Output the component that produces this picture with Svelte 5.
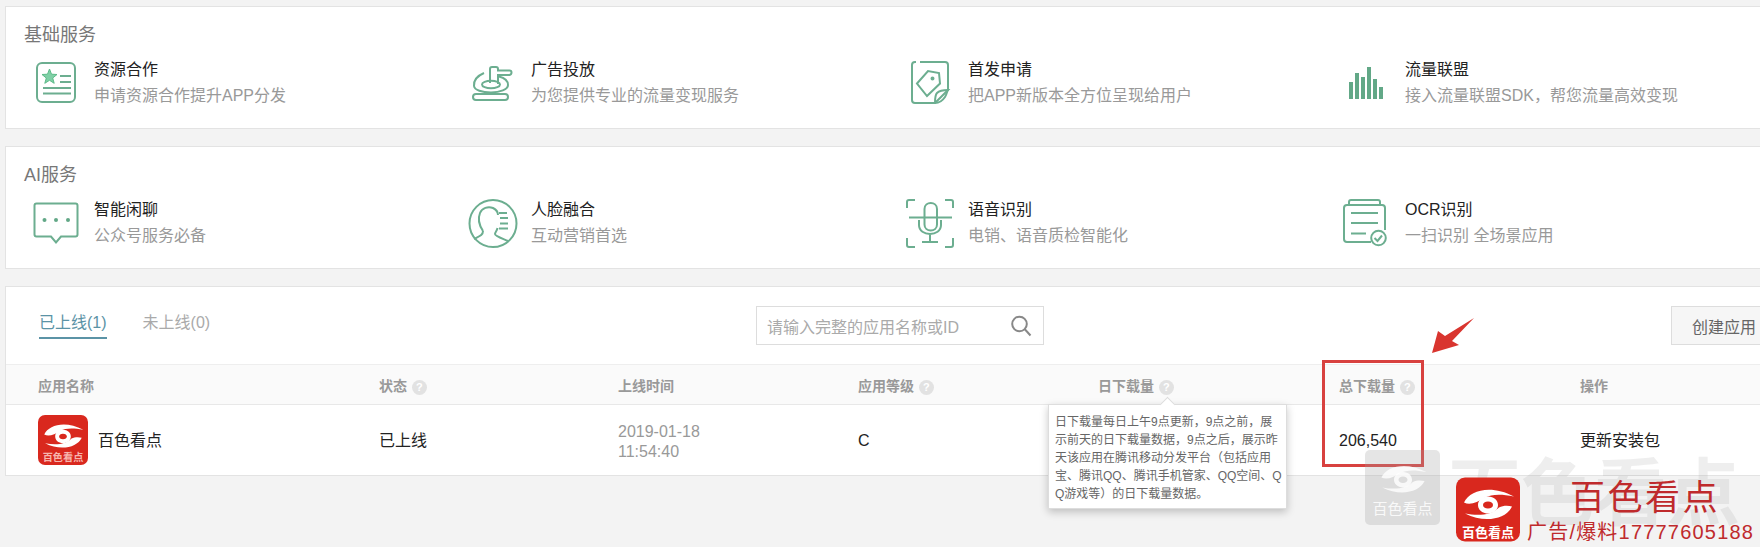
<script>
  const basic = [
    { icon: 'star', name: '资源合作', desc: '申请资源合作提升APP分发' },
    { icon: 'stamp', name: '广告投放', desc: '为您提供专业的流量变现服务' },
    { icon: 'tag', name: '首发申请', desc: '把APP新版本全方位呈现给用户' },
    { icon: 'bars', name: '流量联盟', desc: '接入流量联盟SDK，帮您流量高效变现' }
  ];
  const ai = [
    { icon: 'chat', name: '智能闲聊', desc: '公众号服务必备' },
    { icon: 'face', name: '人脸融合', desc: '互动营销首选' },
    { icon: 'mic', name: '语音识别', desc: '电销、语音质检智能化' },
    { icon: 'ocr', name: 'OCR识别', desc: '一扫识别 全场景应用' }
  ];
  const sections = [
    { title: '基础服务', items: basic },
    { title: 'AI服务', items: ai }
  ];
  const bars = [
    [14, 24], [20, 15], [26, 19], [32, 9], [38, 21], [44, 29]
  ];
</script>

{#snippet icon(name)}
  <svg class="icon" viewBox="0 0 64 50" width="64" height="50" aria-hidden="true">
    {#if name === 'star'}
      <rect x="13" y="5" width="38" height="39" rx="5" />
      <path class="star" d="M25.5 11l2 5.2 5.5.3-4.300 3.500 1.500 5.300-4.700-3-4.700 3 1.500-5.300-4.300-3.500 5.500-.3z" />
      <path d="M36 18h11M36 24h11M19 30h28M19 35.500h28" />
    {:else if name === 'stamp'}
      <rect x="12" y="36" width="35" height="6" rx="3" />
      <path d="M23 15C16 18 12.500 23 13 28c.5 4 8 6.500 17 6.500s17-3 17-7.500c0-4-3-7-9-8.500" />
      <ellipse cx="30" cy="26.500" rx="9" ry="3.800" />
      <path d="M29 25V11q0-2 2-2h4q2 0 2 2v1.500h11.500q2 0 2 2T48.500 17H37v9" />
    {:else if name === 'tag'}
      <path d="M18 4h-1a3 3 0 0 0-3 3v35a3 3 0 0 0 3 3h20l13-13V7a3 3 0 0 0-3-3H22" />
      <path d="M37 45c0-5 0-8 2-10 2-2 6-3 11-3-1 1-1 4-3 7s-6 6-10 6z" />
      <path d="M19 25.500l11-12.500 11 2 1 10.500-13 12.500z" />
      <circle cx="34.500" cy="20.500" r="1" />
    {:else if name === 'bars'}
      {#each bars as [x, y]}
        <rect class="solid" x={x} y={y} width="4" height={41 - y} />
      {/each}
    {:else if name === 'chat'}
      <path d="M12.500 5.500h39a2 2 0 0 1 2 2v29a2 2 0 0 1-2 2H37l-5 6-5-6H12.500a2 2 0 0 1-2-2v-29a2 2 0 0 1 2-2z" />
      <circle class="solid" cx="20.500" cy="22" r="2" />
      <circle class="solid" cx="32" cy="22" r="2" />
      <circle class="solid" cx="44" cy="22" r="2" />
    {:else if name === 'face'}
      <circle cx="32" cy="25.500" r="23.500" />
      <path d="M22 33c-4-6-5-13-3-18 2-5 8-7 13-5 3 1.500 5 4 5 7" />
      <path d="M36.500 30c-.5 3-2.500 4-2.500 6 0 2 6 4 13 7M22 33c0 4-3 5-9 8" />
      <path d="M38 15h8M39 20h8M39 25.500h8M38 30.500h9" />
    {:else if name === 'mic'}
      <path d="M9 10V4a2 2 0 0 1 2-2h6M47 2h6a2 2 0 0 1 2 2v6M9 40v7a2 2 0 0 0 2 2h6M47 49h6a2 2 0 0 0 2-2v-7" />
      <path d="M11 19.500h43" />
      <path d="M26.500 19.500V11c0-8 12.500-8 12.500 0v8.500M26.500 19.500v7c0 8 12.500 8 12.500 0v-7" />
      <path d="M21 22v5c0 12 22 12 22 0v-5M32 36v8M24 44h16" />
    {:else if name === 'ocr'}
      <path d="M14 7V4a2 2 0 0 1 2-2h27a2 2 0 0 1 2 2v3" />
      <path d="M36 44H12a3 3 0 0 1-3-3V10a3 3 0 0 1 3-3h35a3 3 0 0 1 3 3v22" />
      <path d="M16 15h27M16 25h27M16 35.500h15" />
      <circle cx="43.500" cy="40" r="7.300" />
      <path d="M39.500 40l3 3 4.500-5.500" />
    {/if}
  </svg>
{/snippet}

{#snippet swirl()}
  <path d="M8 25C14 12 36 7 58 19 44 16 35 17 29 20 21 25 14 28 8 25z" />
  <path d="M56 29C50 42 28 46 9 36 24 39 36 37 43 30 47 28 52 28 56 29z" />
  <path fill-rule="evenodd" d="M32 19c6 0 10 4 10 8.500S38 36 32 36s-10-4-10-8.500S26 19 32 19zm0 5c-3 0-5 1.500-5 3.500s2 3.500 5 3.500 5-1.500 5-3.500-2-3.500-5-3.500z" />
{/snippet}

{#snippet logo(cls)}
  <svg class={cls} viewBox="0 0 64 64" aria-hidden="true">
    <rect class="logo-bg" width="64" height="64" rx="9" />
    <g class="logo-mark">{@render swirl()}</g>
    <text class="logo-text" x="32" y="59" text-anchor="middle">百色看点</text>
  </svg>
{/snippet}

{#snippet help()}
  <span class="help">?</span>
{/snippet}

<div class="page">
  {#each sections as section}
    <section class="card service">
      <h2>{section.title}</h2>
      <div class="grid">
        {#each section.items as item}
          <div class="item">
            {@render icon(item.icon)}
            <div>
              <div class="name">{item.name}</div>
              <div class="desc">{item.desc}</div>
            </div>
          </div>
        {/each}
      </div>
    </section>
  {/each}

  <section class="card apps">
    <div class="toolbar">
      <div class="tabs">
        <span class="tab active">已上线(1)</span>
        <span class="tab">未上线(0)</span>
      </div>
      <div class="search">
        <span class="placeholder">请输入完整的应用名称或ID</span>
        <svg viewBox="0 0 22 22" width="22" height="22" aria-hidden="true">
          <circle cx="9.500" cy="9" r="7.300" />
          <path d="M14.800 14.300L20.500 20.500" />
        </svg>
      </div>
      <button class="create">创建应用</button>
    </div>

    <div class="row head">
      <div>应用名称</div>
      <div>状态 {@render help()}</div>
      <div>上线时间</div>
      <div>应用等级 {@render help()}</div>
      <div class="daily">
        日下载量 {@render help()}
        <div class="tooltip">日下载量每日上午9点更新，9点之前，展示前天的日下载量数据，9点之后，展示昨天该应用在腾讯移动分发平台（包括应用宝、腾讯QQ、腾讯手机管家、QQ空间、QQ游戏等）的日下载量数据。</div>
      </div>
      <div>总下载量 {@render help()}</div>
      <div>操作</div>
    </div>

    <div class="row body">
      <div class="app">
        {@render logo('app-logo')}
        <span>百色看点</span>
      </div>
      <div>已上线</div>
      <div class="time">2019-01-18<br />11:54:40</div>
      <div>C</div>
      <div></div>
      <div>206,540</div>
      <div>更新安装包</div>
    </div>
  </section>

  <div class="redbox"></div>
  <svg class="redarrow" viewBox="0 0 50 44" width="50" height="44" aria-hidden="true">
    <path d="M46 1L24 24l7 4-27 8 6-22 7 5z" />
  </svg>

  <div class="watermark">
    <div class="wm-square">
      <svg viewBox="0 0 64 50" width="58" height="45" aria-hidden="true">{@render swirl()}</svg>
      <span>百色看点</span>
    </div>
    <span class="wm-text">百色看点</span>
  </div>

  <div class="brand">
    {@render logo('brand-logo')}
    <div class="brand-text">
      <div class="brand-name">百色看点</div>
      <div class="brand-tel">广告/爆料17777605188</div>
    </div>
  </div>
</div>

<style>
  :global(body) {
    margin: 0;
    background: #f3f3f3;
  }
  .page {
    position: relative;
    width: 1760px;
    height: 547px;
    overflow: hidden;
    box-sizing: border-box;
    padding: 6px 0 0 5px;
    background: #f3f3f3;
    font-family: "Liberation Sans", "Noto Sans CJK SC", sans-serif;
    font-size: 16px;
    color: #222;
  }
  .card {
    width: 1790px;
    box-sizing: border-box;
    background: #fff;
    border: 1px solid #e3e3e3;
    margin-bottom: 17px;
  }
  .service {
    padding: 18px 18px 20px;
  }
  h2 {
    margin: 0 0 13px;
    font-size: 18px;
    font-weight: 400;
    line-height: 20px;
    color: #777;
  }
  .grid {
    display: grid;
    grid-template-columns: repeat(4, 437px);
  }
  .item {
    display: flex;
    gap: 6px;
  }
  .icon {
    flex: none;
    fill: none;
    stroke: #6cae90;
    stroke-width: 2;
  }
  .icon .star {
    fill: #7fd0a6;
    stroke: #5cba88;
    stroke-width: 1;
  }
  .icon .solid {
    fill: #62a887;
    stroke: none;
  }
  .name {
    font-size: 16px;
    line-height: 24px;
    color: #222;
  }
  .desc {
    margin-top: 2px;
    font-size: 16px;
    line-height: 24px;
    color: #999;
    white-space: nowrap;
  }

  .toolbar {
    display: flex;
    align-items: flex-start;
    height: 77px;
    box-sizing: border-box;
    padding-left: 33px;
  }
  .tabs {
    display: flex;
    gap: 36px;
    width: 717px;
    margin-top: 24px;
  }
  .tab {
    padding-bottom: 2px;
    border-bottom: 2px solid transparent;
    line-height: 24px;
    color: #aaa;
  }
  .tab.active {
    color: #5b93a6;
    border-bottom-color: #5b93a6;
  }
  .search {
    display: flex;
    align-items: center;
    justify-content: space-between;
    width: 288px;
    height: 39px;
    box-sizing: border-box;
    margin-top: 19px;
    padding: 0 11px 0 10px;
    border: 1px solid #ddd;
    font-size: 16px;
    color: #aaa;
  }
  .search svg {
    fill: none;
    stroke: #888;
    stroke-width: 2;
  }
  .create {
    flex: none;
    width: 110px;
    height: 39px;
    margin: 19px 0 0 627px;
    padding: 0 0 0 20px;
    text-align: left;
    background: #f6f6f6;
    border: 1px solid #ddd;
    font: inherit;
    color: #666;
  }
  .row {
    display: grid;
    grid-template-columns: 341px 239px 240px 240px 241px 241px 241px;
    align-items: center;
    padding-left: 32px;
  }
  .head {
    height: 41px;
    box-sizing: border-box;
    background: #fafafa;
    border-top: 1px solid #eee;
    border-bottom: 1px solid #e8e8e8;
    font-size: 14px;
    font-weight: 700;
    color: #999;
  }
  .help {
    display: inline-block;
    width: 15px;
    height: 15px;
    margin-left: 1px;
    border-radius: 50%;
    background: #e2e2e2;
    color: #fff;
    font-size: 11px;
    line-height: 15px;
    text-align: center;
  }
  .daily {
    position: relative;
  }
  .tooltip {
    position: absolute;
    top: 29px;
    left: -50px;
    z-index: 2;
    width: 239px;
    height: 105px;
    box-sizing: border-box;
    padding: 8px 2px 0 6px;
    background: #fff;
    border: 1px solid #ddd;
    box-shadow: 0 3px 8px rgba(0, 0, 0, 0.22);
    font-size: 12px;
    font-weight: 400;
    line-height: 18px;
    color: #666;
    word-break: break-all;
  }
  .tooltip::before {
    content: "";
    position: absolute;
    top: -6px;
    left: 113px;
    width: 10px;
    height: 10px;
    background: #fff;
    border-top: 1px solid #ddd;
    border-left: 1px solid #ddd;
    transform: rotate(45deg);
  }
  .body {
    height: 70px;
    box-sizing: border-box;
    padding-top: 2px;
    line-height: 20px;
  }
  .app {
    display: flex;
    align-items: center;
    gap: 10px;
  }
  .app-logo {
    width: 50px;
    height: 50px;
    margin-top: -2px;
  }
  .logo-bg {
    fill: #d9281e;
  }
  .logo-mark {
    fill: #fff;
  }
  .logo-text {
    font-size: 13px;
    font-weight: 700;
    fill: #f7b5ae;
  }
  .time {
    padding-top: 2px;
    color: #999;
  }

  .redbox {
    position: absolute;
    left: 1322px;
    top: 360px;
    width: 102px;
    height: 107px;
    box-sizing: border-box;
    border: 3px solid #d8413f;
  }
  .redarrow {
    position: absolute;
    left: 1428px;
    top: 317px;
  }
  .redarrow path {
    fill: #d9352f;
  }

  .watermark {
    position: absolute;
    left: 1365px;
    top: 450px;
    display: flex;
    gap: 8px;
    pointer-events: none;
  }
  .wm-square {
    display: flex;
    flex-direction: column;
    align-items: center;
    justify-content: flex-end;
    width: 75px;
    height: 75px;
    box-sizing: border-box;
    padding-bottom: 7px;
    border-radius: 5px;
    background: rgba(160, 160, 160, 0.28);
    font-size: 15px;
    line-height: 18px;
    color: rgba(255, 255, 255, 0.85);
  }
  .wm-square svg {
    fill: rgba(255, 255, 255, 0.8);
  }
  .wm-text {
    margin-top: 6px;
    font-size: 73px;
    line-height: 75px;
    font-weight: 700;
    color: rgba(170, 170, 170, 0.2);
  }
  .brand {
    position: absolute;
    left: 1456px;
    top: 477px;
    display: flex;
    gap: 7px;
  }
  .brand-logo {
    flex: none;
    width: 64px;
    height: 65px;
  }
  .brand-logo .logo-text {
    fill: #fff;
  }
  .brand-text {
    white-space: nowrap;
  }
  .brand-name {
    margin-left: 43px;
    font-size: 35px;
    line-height: 42px;
    letter-spacing: 2.500px;
    color: #bf2a2c;
  }
  .brand-tel {
    margin-top: 1px;
    font-size: 20px;
    line-height: 24px;
    letter-spacing: 1.200px;
    color: #bf2a2c;
  }
</style>
